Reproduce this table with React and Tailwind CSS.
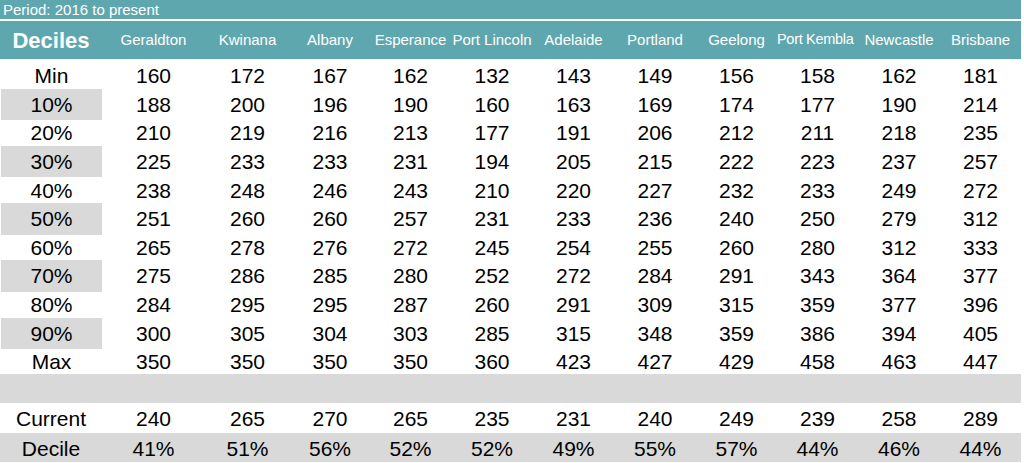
const cities = [
  "Geraldton",
  "Kwinana",
  "Albany",
  "Esperance",
  "Port Lincoln",
  "Adelaide",
  "Portland",
  "Geelong",
  "Port Kembla",
  "Newcastle",
  "Brisbane",
];

const rows = [
  ["Min", [160, 172, 167, 162, 132, 143, 149, 156, 158, 162, 181]],
  ["10%", [188, 200, 196, 190, 160, 163, 169, 174, 177, 190, 214]],
  ["20%", [210, 219, 216, 213, 177, 191, 206, 212, 211, 218, 235]],
  ["30%", [225, 233, 233, 231, 194, 205, 215, 222, 223, 237, 257]],
  ["40%", [238, 248, 246, 243, 210, 220, 227, 232, 233, 249, 272]],
  ["50%", [251, 260, 260, 257, 231, 233, 236, 240, 250, 279, 312]],
  ["60%", [265, 278, 276, 272, 245, 254, 255, 260, 280, 312, 333]],
  ["70%", [275, 286, 285, 280, 252, 272, 284, 291, 343, 364, 377]],
  ["80%", [284, 295, 295, 287, 260, 291, 309, 315, 359, 377, 396]],
  ["90%", [300, 305, 304, 303, 285, 315, 348, 359, 386, 394, 405]],
  ["Max", [350, 350, 350, 350, 360, 423, 427, 429, 458, 463, 447]],
];

const current = [240, 265, 270, 265, 235, 231, 240, 249, 239, 258, 289];
const decile = ["41%", "51%", "56%", "52%", "52%", "49%", "55%", "57%", "44%", "46%", "44%"];

const cols =
  "grid grid-cols-[102px_103px_85px_80px_81px_82px_81px_82px_81px_81px_82px_81px]";

const App = () => {
  return (
    <div
      className="bg-white w-[1024px] h-[463px] overflow-hidden text-black"
      style={{ fontFamily: '"Liberation Sans", Arial, sans-serif' }}
    >
      <div className="w-[1021px]">
        {/* PERIOD BAR */}
        <div className="h-[19px] bg-[#5fa7af] text-white text-[15px] leading-[19px] pl-[3px]">
          Period: 2016 to present
        </div>

        {/* HEADER */}
        <div className={`${cols} h-[38px] mt-[2px] bg-[#5fa7af] text-white items-center`}>
          <div className="text-[22px] font-bold text-center">Deciles</div>
          {cities.map((c) =>
            c === "Port Kembla" ? (
              <div key={c} className="text-[14.5px] tracking-[-0.3px] whitespace-nowrap text-left">
                {c}
              </div>
            ) : (
              <div key={c} className="text-[15px] whitespace-nowrap text-center">
                {c}
              </div>
            )
          )}
        </div>

        {/* DECILE ROWS */}
        {rows.map(([label, vals], i) => (
          <div key={label} className={`${cols} h-[28.65px] items-center text-[21px] pt-px`}>
            <div
              className={`h-full flex items-center justify-center ml-px ${
                i % 2 === 1 ? "bg-[#d9d9d9]" : ""
              }`}
            >
              {label}
            </div>
            {vals.map((v, j) => (
              <div key={j} className="text-center">
                {v}
              </div>
            ))}
          </div>
        ))}

        {/* SPACER */}
        <div className="h-[29px] bg-[#d9d9d9]" />

        {/* CURRENT */}
        <div className={`${cols} h-[30px] items-center text-[21px]`}>
          <div className="text-center">Current</div>
          {current.map((v, j) => (
            <div key={j} className="text-center">
              {v}
            </div>
          ))}
        </div>

        {/* DECILE */}
        <div className={`${cols} h-[29px] items-center text-[21px] bg-[#d9d9d9]`}>
          <div className="text-center">Decile</div>
          {decile.map((v, j) => (
            <div key={j} className="text-center">
              {v}
            </div>
          ))}
        </div>
      </div>
    </div>
  );
};

export default App;
